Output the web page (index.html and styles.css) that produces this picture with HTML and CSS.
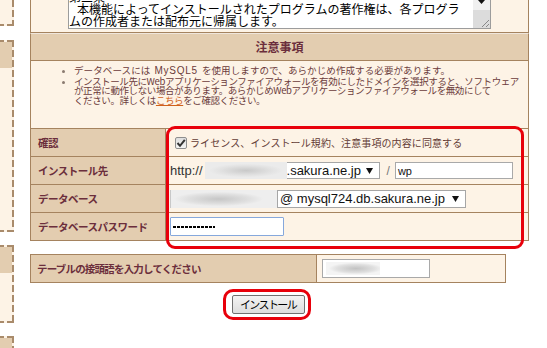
FILE: index.html
```html
<!DOCTYPE html>
<html lang="ja">
<head>
<meta charset="utf-8">
<title>インストール</title>
<link rel="stylesheet" href="styles.css">
</head>
<body>
<div class="page">
  <aside class="side">
    <div class="sbox s1"></div>
    <div class="sbox s2"><div class="shead"></div></div>
    <div class="sbox s3"><div class="shead"></div></div>
    <div class="sbox s4"><div class="shead"></div></div>
  </aside>
  <main class="main">
    <section class="license">
      <div class="ta">
        <div class="ta-text">
          <div>第三条</div>
          <div><span class="ind"></span>本機能によってインストールされたプログラムの著作権は、各プログラ</div>
          <div>ムの作成者または配布元に帰属します。</div>
        </div>
        <div class="ta-bar">
          <div class="ta-down"><svg width="7" height="4" viewBox="0 0 7 4"><polygon points="0,0 7,0 3.5,4" fill="#111"/></svg></div>
          <div class="ta-grip"><svg width="10" height="10" viewBox="0 0 10 10"><path d="M9 2 L2 9 M9 6 L6 9" stroke="#888" stroke-width="1" fill="none"/></svg></div>
        </div>
      </div>
    </section>
    <div class="notehead">注意事項</div>
    <ul class="notes">
      <li class="n1">データベースには <span class="lat">MySQL5</span> を使用しますので、あらかじめ作成する必要があります。</li>
      <li class="n2">インストール先にWebアプリケーションファイアウォールを有効にしたドメインを選択すると、ソフトウェア<br>が正常に動作しない場合があります。あらかじめWebアプリケーションファイアウォールを無効にして<br>ください。詳しくは<a class="link" href="#">こちら</a>をご確認ください。</li>
    </ul>
    <div class="form">
      <div class="row">
        <div class="lab">確認</div>
        <div class="val">
          <span class="chk"><svg width="10" height="10" viewBox="0 0 10 10"><path d="M1.5 5 L4 7.8 L8.8 1.8" stroke="#333" stroke-width="2" fill="none"/></svg></span>
          <span class="agree">ライセンス、インストール規約、注意事項の内容に同意する</span>
        </div>
      </div>
      <div class="row">
        <div class="lab">インストール先</div>
        <div class="val">
          <span class="http">http://</span>
          <span class="blur b-domain"></span>
          <span class="select s-domain"><span class="opt">.sakura.ne.jp</span><svg class="arr" width="7" height="6" viewBox="0 0 7 6"><polygon points="0,0 7,0 3.5,6" fill="#111"/></svg></span>
          <span class="slash">/</span>
          <span class="input i-dir">wp</span>
        </div>
      </div>
      <div class="row">
        <div class="lab">データベース</div>
        <div class="val">
          <span class="blur b-db"></span>
          <span class="select s-db"><span class="opt">@ mysql724.db.sakura.ne.jp</span><svg class="arr" width="7" height="6" viewBox="0 0 7 6"><polygon points="0,0 7,0 3.5,6" fill="#111"/></svg></span>
        </div>
      </div>
      <div class="row">
        <div class="lab">データベースパスワード</div>
        <div class="val">
          <span class="input i-pass"><span class="mask"></span></span>
        </div>
      </div>
    </div>
    <div class="lower">
      <div class="prefix">
        <div class="lab">テーブルの接頭語を入力してください</div>
        <div class="val">
          <span class="input i-prefix"><span class="blur-in"></span></span>
        </div>
      </div>
      <div class="actions">
        <span class="btnwrap"><button class="btn" type="button">インストール</button></span>
      </div>
    </div>
  </main>
</div>
</body>
</html>
```
FILE: styles.css
```css
* { box-sizing: border-box; }

body {
  margin: 0;
  background: #ffffff;
  font-family: "Noto Sans CJK JP", "Liberation Sans", sans-serif;
  color: #333;
}

.page {
  display: flex;
  gap: 16px;
  width: 547px;
  height: 348px;
  overflow: hidden;
}

/* left sidebar dashed boxes */
.side {
  width: 14px;
  flex: none;
  display: flex;
  flex-direction: column;
}

.sbox {
  flex: none;
  background:
    repeating-linear-gradient(to bottom, #a98b6b 0 7px, transparent 7px 10px) right top / 2px 100% no-repeat,
    repeating-linear-gradient(to left, #a98b6b 0 7px, transparent 7px 10px) left top / 100% 2px no-repeat,
    repeating-linear-gradient(to left, #a98b6b 0 7px, transparent 7px 10px) left bottom / 100% 2px no-repeat,
    #fdf3e6;
}

.s1 {
  height: 26px;
  background:
    repeating-linear-gradient(to bottom, #a98b6b 0 7px, transparent 7px 10px) right top / 2px 100% no-repeat,
    repeating-linear-gradient(to left, #a98b6b 0 7px, transparent 7px 10px) left bottom / 100% 2px no-repeat,
    #fdf3e6;
}
.s2 { margin-top: 14px; height: 192px; }
.s3 { margin-top: 13px; height: 78px; }
.s4 { margin-top: 13px; height: 40px; }

.shead {
  margin: 2px 2px 0 0;
  height: 26px;
  background: #e3cdb0;
}

/* main column */
.main {
  width: 499px;
  flex: none;
  display: flex;
  flex-direction: column;
}

.license {
  height: 33px;
  background: #fdf3e6;
  border-left: 1px solid #a5835f;
  border-right: 1px solid #a5835f;
  border-bottom: 1px solid #a5835f;
  padding-left: 37px;
  overflow: hidden;
}

.ta {
  margin-top: -10px;
  width: 423px;
  height: 39px;
  border: 1px solid #9c9c9c;
  background: #ffffff;
  display: flex;
}

.ta-text {
  flex: 1;
  font-size: 12px;
  line-height: 12px;
  color: #000;
  white-space: nowrap;
  overflow: hidden;
}

.ind {
  display: inline-block;
  width: 8px;
}

.ta-bar {
  width: 17px;
  flex: none;
  display: flex;
  flex-direction: column;
  background: #eaeaea;
}

.ta-down {
  height: 19px;
  display: flex;
  align-items: flex-end;
  justify-content: center;
  padding-bottom: 6px;
  background: #f0f0f0;
}

.ta-grip {
  flex: 1;
  background: #dcdcdc;
  display: flex;
  align-items: flex-end;
  justify-content: flex-end;
}

.notehead {
  height: 28px;
  background: #e3cdb0;
  border-left: 1px solid #a5835f;
  border-right: 1px solid #a5835f;
  border-bottom: 1px solid #a5835f;
  border-top: 1px solid #efe6dc;
  text-align: center;
  font-size: 12px;
  font-weight: bold;
  line-height: 26px;
  color: #6b2e3c;
}

.notes {
  margin: 0;
  height: 68px;
  padding: 5px 0 0 43px;
  background: #fdf3e6;
  border-left: 1px solid #a5835f;
  border-right: 1px solid #a5835f;
  border-bottom: 1px solid #a5835f;
  font-size: 9.5px;
  line-height: 9.4px;
  color: #6b3b3b;
  white-space: nowrap;
  list-style: none;
  overflow: hidden;
}

.notes li {
  position: relative;
}

.n1 { letter-spacing: 0.1px; }
.n2 { letter-spacing: -0.4px; margin-top: 1.5px; }

.notes li::before {
  content: "";
  position: absolute;
  left: -12px;
  top: 4px;
  width: 3px;
  height: 3px;
  border-radius: 50%;
  background: #8a7a70;
}

.lat {
  font-family: "Liberation Sans", sans-serif;
  font-size: 10px;
  letter-spacing: 0.7px;
  margin: 0 2px;
}

.link {
  color: #d0601a;
  text-decoration: underline;
}

/* form rows */
.form {
  position: relative;
  border-left: 1px solid #a5835f;
  border-right: 1px solid #a5835f;
}

.form::after {
  content: "";
  position: absolute;
  left: 135px;
  top: -3px;
  width: 352px;
  height: 117px;
  border: 3px solid #e8000b;
  border-radius: 9px;
  pointer-events: none;
}

.row {
  display: grid;
  grid-template-columns: 135px 1fr;
  height: 28px;
  border-bottom: 1px solid #a5835f;
}

.lab {
  background: #e3cdb0;
  border-right: 1px solid #a5835f;
  display: flex;
  align-items: center;
  padding-left: 7px;
  font-size: 10.5px;
  font-weight: bold;
  letter-spacing: -0.5px;
  color: #6b2e3c;
  white-space: nowrap;
}

.prefix .lab { letter-spacing: -0.8px; padding-left: 6px; }

.val {
  background: #fdf3e6;
  display: flex;
  align-items: center;
  padding-left: 4px;
  white-space: nowrap;
}

.chk {
  margin-left: 5px;
  width: 12px;
  height: 12px;
  border: 1px solid #8e8e8e;
  border-radius: 2px;
  background: linear-gradient(#dedede, #f4f4f4);
  display: flex;
  align-items: center;
  justify-content: center;
}

.agree {
  margin-left: 3px;
  font-size: 10px;
  letter-spacing: 0.1px;
  color: #633b35;
}

.http {
  font-family: "Liberation Sans", sans-serif;
  font-size: 13px;
  color: #333;
}

.blur {
  height: 18px;
  background: radial-gradient(ellipse 45% 40% at 50% 50%, #c9c9c9, #e2e2e2 70%, #ebebeb);
}

.b-domain {
  margin-left: 2px;
  width: 82px;
  height: 17px;
}

.b-db {
  width: 107px;
  border-left: 1px solid #c8c8c8;
  background: radial-gradient(ellipse 42% 40% at 45% 50%, #c6c6c6, #e0e0e0 70%, #eeeeee);
}

.select {
  height: 18px;
  background: #ffffff;
  border: 1px solid #a6a6a6;
  display: flex;
  align-items: center;
  font-family: "Liberation Sans", sans-serif;
  font-size: 13px;
  color: #111;
}

.s-domain {
  width: 93px;
  height: 17px;
  border-left: none;
}

.s-db {
  width: 189px;
  padding-left: 2px;
}

.opt { flex: 1; }

.arr { margin-right: 6px; }

.slash {
  margin: 0 5px 0 7px;
  font-family: "Liberation Sans", sans-serif;
  font-size: 12px;
  color: #777;
}

.input {
  display: flex;
  align-items: center;
  background: #ffffff;
  border: 1px solid #a9a9a9;
  font-family: "Liberation Sans", sans-serif;
  font-size: 11px;
  color: #111;
}

.i-dir {
  width: 118px;
  height: 17px;
  padding-left: 2px;
}

.i-pass {
  width: 114px;
  height: 19px;
  border-color: #86a8dc;
  border-radius: 1px;
  padding-left: 2px;
}

.mask {
  width: 42px;
  height: 2px;
  background: repeating-linear-gradient(to right, #000 0 3px, transparent 3px 4px);
}

/* lower block */
.lower {
  width: 476px;
  margin-top: 13px;
  display: flex;
  flex-direction: column;
}

.prefix {
  display: grid;
  grid-template-columns: 286px 1fr;
  height: 29px;
  border: 1px solid #a5835f;
}

.prefix .val { padding-left: 5px; }

.i-prefix {
  width: 108px;
  height: 19px;
  padding-left: 3px;
}

.blur-in {
  width: 54px;
  height: 13px;
  background: radial-gradient(ellipse 50% 45% at 55% 50%, #c2c2c2, #e0e0e0 70%, #f4f4f4);
}

.actions {
  margin-top: 12px;
  display: flex;
  justify-content: center;
}

.btnwrap {
  position: relative;
  display: inline-flex;
}

.btnwrap::after {
  content: "";
  position: absolute;
  left: -9px;
  top: -6px;
  right: -6px;
  bottom: -6px;
  border: 3px solid #e8000b;
  border-radius: 10px;
  pointer-events: none;
}

.btn {
  width: 73px;
  height: 19px;
  margin: 0;
  padding: 0;
  border: 1px solid #707070;
  border-radius: 2px;
  background: linear-gradient(#f3f3f3, #dddddd);
  font-family: "Noto Sans CJK JP", sans-serif;
  font-size: 11px;
  letter-spacing: -1.6px;
  color: #000;
  line-height: 17px;
}
```
